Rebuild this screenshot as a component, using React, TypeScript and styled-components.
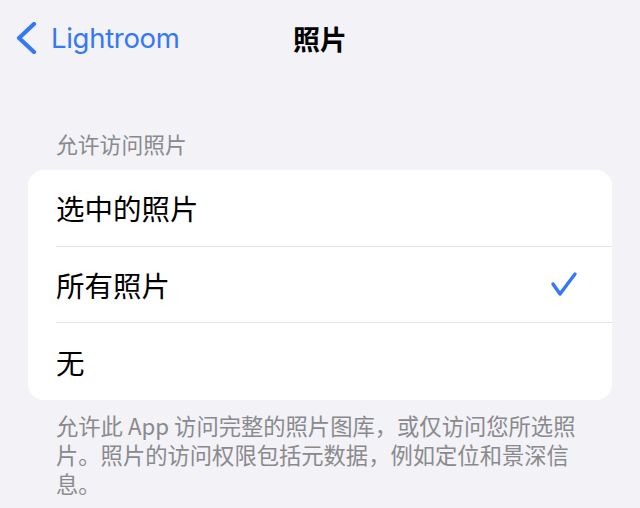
import React from 'react'
import styled, { createGlobalStyle } from 'styled-components'

const GlobalStyle = createGlobalStyle`
  html, body {
    margin: 0;
    padding: 0;
    background: #f2f2f7;
  }
  body {
    font-family: Inter, "Noto Sans CJK SC", sans-serif;
    -webkit-font-smoothing: antialiased;
  }
`

const Page = styled.div`
  width: 640px;
  height: 508px;
  overflow: hidden;
  background: #f2f2f7;
  box-sizing: border-box;
  padding: 0 28px;
`

const NavBar = styled.div`
  display: grid;
  grid-template-columns: 1fr auto 1fr;
  align-items: center;
  height: 76px;
  margin: 0 -28px;
  padding: 0 16px;
`

const BackButton = styled.div`
  display: flex;
  align-items: center;
  gap: 14px;
  color: #3478f6;
  font-family: Inter, "Noto Sans", sans-serif;
  font-size: 27.5px;
  letter-spacing: -0.3px;
`

const Title = styled.div`
  font-family: "Noto Sans CJK SC", sans-serif;
  font-weight: 700;
  font-size: 27px;
  color: #000;
`

const SectionHeader = styled.div`
  margin-top: 53px;
  padding: 0 28px;
  height: 41px;
  font-family: "Noto Sans CJK SC", sans-serif;
  font-size: 21.8px;
  line-height: 30px;
  color: #8a8a8e;
`

const Card = styled.div`
  background: #fff;
  border-radius: 16px;
  overflow: hidden;
`

const Row = styled.div<{ $last?: boolean }>`
  display: flex;
  align-items: center;
  justify-content: space-between;
  height: 76.5px;
  margin-left: 28px;
  padding-right: 34px;
  box-sizing: border-box;
  border-bottom: ${(p) => (p.$last ? 'none' : '1.5px solid #e3e3e8')};
  font-family: "Noto Sans CJK SC", sans-serif;
  font-size: 28.5px;
  color: #000;
`

const Footer = styled.div`
  padding: 0 28px;
  margin-top: 11px;
  width: 528px;
  font-family: "Noto Sans CJK SC", sans-serif;
  font-size: 22.3px;
  line-height: 29px;
  color: #8a8a8e;
`

const Chevron = () => (
  <svg width="21" height="32" viewBox="0 0 21 32">
    <path
      d="M18 2 L3 16 L18 30"
      fill="none"
      stroke="#3478f6"
      strokeWidth="4.2"
      strokeLinecap="round"
      strokeLinejoin="round"
    />
  </svg>
)

const Check = () => (
  <svg width="28" height="26" viewBox="0 0 28 26">
    <path
      d="M3 13 L10 23 L25 3"
      fill="none"
      stroke="#3478f6"
      strokeWidth="3.4"
      strokeLinecap="round"
      strokeLinejoin="round"
    />
  </svg>
)

const options = ['选中的照片', '所有照片', '无']
const selected = '所有照片'

export default function App() {
  return (
    <Page>
      <GlobalStyle />
      <NavBar>
        <BackButton>
          <Chevron />
          Lightroom
        </BackButton>
        <Title>照片</Title>
        <div />
      </NavBar>
      <SectionHeader>允许访问照片</SectionHeader>
      <Card>
        {options.map((o, i) => (
          <Row key={o} $last={i === options.length - 1}>
            {o}
            {o === selected && <Check />}
          </Row>
        ))}
      </Card>
      <Footer>
        允许此 App 访问完整的照片图库，或仅访问您所选照片。照片的访问权限包括元数据，例如定位和景深信息。
      </Footer>
    </Page>
  )
}
